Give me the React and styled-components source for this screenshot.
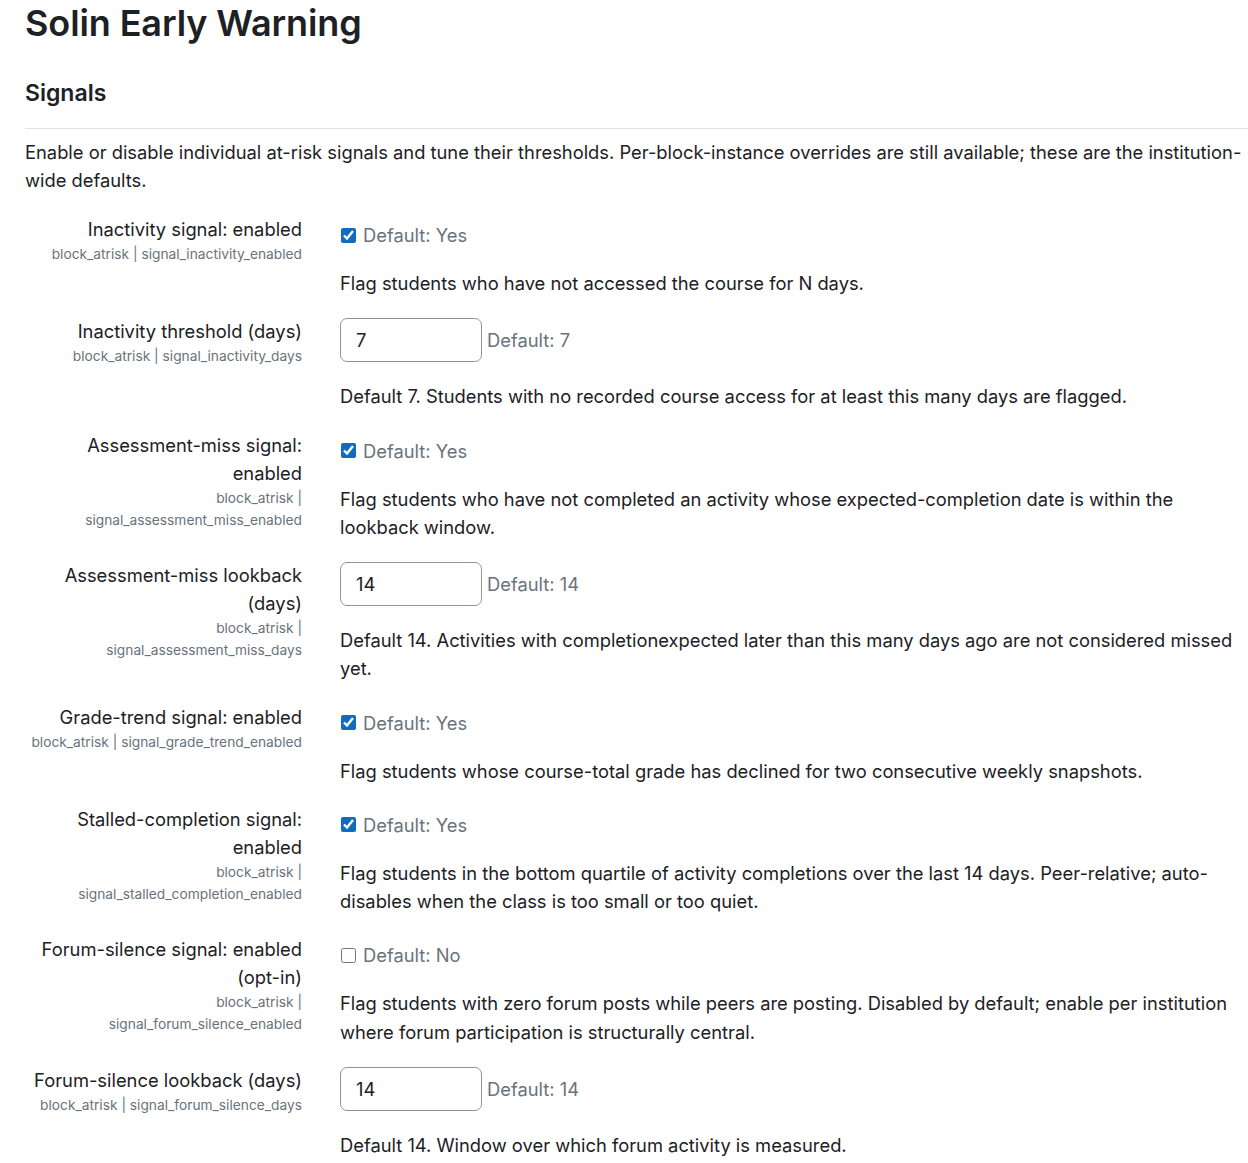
import React from "react";
import styled, { createGlobalStyle } from "styled-components";

const Global = createGlobalStyle`
  html, body { margin: 0; padding: 0; background: #fff; }
  body {
    font-family: Inter, "Noto Sans", "Liberation Sans", sans-serif;
    color: #1d2125;
    font-size: 18.33px;
    line-height: 28px;
  }
  * { box-sizing: border-box; }
`;

const Page = styled.div`
  padding: 0 0 20px 25px;
  width: 1248px;
`;

const Title = styled.h2`
  margin: 0;
  padding-top: 2px;
  font-size: 36px;
  line-height: 43px;
  font-weight: 600;
  letter-spacing: -0.1px;
`;

const SectionTitle = styled.h3`
  margin: 35px 0 0;
  font-size: 23px;
  line-height: 27px;
  font-weight: 600;
`;

const Rule = styled.hr`
  margin: 21px 0 0;
  border: 0;
  border-top: 1px solid #dee2e6;
  height: 0;
`;

const Intro = styled.p`
  margin: 9px 0 0;
`;

const Settings = styled.div`
  margin-top: 21px;
  display: flex;
  flex-direction: column;
  gap: 20px;
`;

const Row = styled.div`
  display: grid;
  grid-template-columns: 277px 1fr;
  column-gap: 38px;
`;

const LabelCol = styled.div`
  text-align: right;
`;

const Label = styled.label`
  display: block;
  line-height: 28px;
`;

const Shortname = styled.span`
  display: block;
  font-size: 13.75px;
  line-height: 22px;
  color: #6a737b;
`;

const FieldCol = styled.div`
  padding-top: ${(p) => (p.$input ? "1px" : "6px")};
`;

const Control = styled.div`
  display: flex;
  align-items: center;
`;

const Check = styled.input.attrs({ type: "checkbox", readOnly: true })`
  width: 15px;
  height: 15px;
  margin: 0 7px 0 1px;
  accent-color: #0f6cbf;
`;

const TextInput = styled.input.attrs({ type: "text", readOnly: true })`
  width: 142px;
  height: 44px;
  padding: 0 15px;
  border: 1px solid #8f959e;
  border-radius: 7px;
  font-family: inherit;
  font-size: 18.33px;
  color: #1d2125;
  background: #fff;
  outline: none;
`;

const DefaultText = styled.span`
  color: #6a737b;
  line-height: 28px;
  margin-left: ${(p) => (p.$input ? "5px" : "0")};
`;

const Description = styled.div`
  margin-top: 20px;
  line-height: 28.25px;
`;

const settings = [
  {
    label: "Inactivity signal: enabled",
    short: ["block_atrisk", "signal_inactivity_enabled"],
    wrapShort: false,
    type: "check",
    checked: true,
    def: "Default: Yes",
    desc: "Flag students who have not accessed the course for N days.",
  },
  {
    label: "Inactivity threshold (days)",
    short: ["block_atrisk", "signal_inactivity_days"],
    wrapShort: false,
    type: "input",
    value: "7",
    def: "Default: 7",
    desc: "Default 7. Students with no recorded course access for at least this many days are flagged.",
  },
  {
    label: "Assessment-miss signal: enabled",
    short: ["block_atrisk", "signal_assessment_miss_enabled"],
    wrapShort: true,
    type: "check",
    checked: true,
    def: "Default: Yes",
    desc: "Flag students who have not completed an activity whose expected-completion date is within the lookback window.",
  },
  {
    label: "Assessment-miss lookback (days)",
    short: ["block_atrisk", "signal_assessment_miss_days"],
    wrapShort: true,
    type: "input",
    value: "14",
    def: "Default: 14",
    desc: "Default 14. Activities with completionexpected later than this many days ago are not considered missed yet.",
  },
  {
    label: "Grade-trend signal: enabled",
    short: ["block_atrisk", "signal_grade_trend_enabled"],
    wrapShort: false,
    type: "check",
    checked: true,
    def: "Default: Yes",
    desc: "Flag students whose course-total grade has declined for two consecutive weekly snapshots.",
  },
  {
    label: "Stalled-completion signal: enabled",
    short: ["block_atrisk", "signal_stalled_completion_enabled"],
    wrapShort: true,
    type: "check",
    checked: true,
    def: "Default: Yes",
    desc: "Flag students in the bottom quartile of activity completions over the last 14 days. Peer-relative; auto-disables when the class is too small or too quiet.",
  },
  {
    label: "Forum-silence signal: enabled (opt-in)",
    short: ["block_atrisk", "signal_forum_silence_enabled"],
    wrapShort: true,
    type: "check",
    checked: false,
    def: "Default: No",
    desc: "Flag students with zero forum posts while peers are posting. Disabled by default; enable per institution where forum participation is structurally central.",
  },
  {
    label: "Forum-silence lookback (days)",
    short: ["block_atrisk", "signal_forum_silence_days"],
    wrapShort: false,
    type: "input",
    value: "14",
    def: "Default: 14",
    desc: "Default 14. Window over which forum activity is measured.",
  },
];

function Setting({ s }) {
  const isInput = s.type === "input";
  return (
    <Row>
      <LabelCol>
        <Label>{s.label}</Label>
        <Shortname>
          {s.short[0]} |{s.wrapShort ? <br /> : " "}
          {s.short[1]}
        </Shortname>
      </LabelCol>
      <FieldCol $input={isInput}>
        <Control>
          {isInput ? (
            <TextInput defaultValue={s.value} />
          ) : (
            <Check defaultChecked={s.checked} />
          )}
          <DefaultText $input={isInput}>{s.def}</DefaultText>
        </Control>
        <Description>{s.desc}</Description>
      </FieldCol>
    </Row>
  );
}

export default function App() {
  return (
    <>
      <Global />
      <Page>
        <Title>Solin Early Warning</Title>
        <SectionTitle>Signals</SectionTitle>
        <Rule />
        <Intro>
          Enable or disable individual at-risk signals and tune their
          thresholds. Per-block-instance overrides are still available; these
          are the institution-wide defaults.
        </Intro>
        <Settings>
          {settings.map((s) => (
            <Setting key={s.label} s={s} />
          ))}
        </Settings>
      </Page>
    </>
  );
}
